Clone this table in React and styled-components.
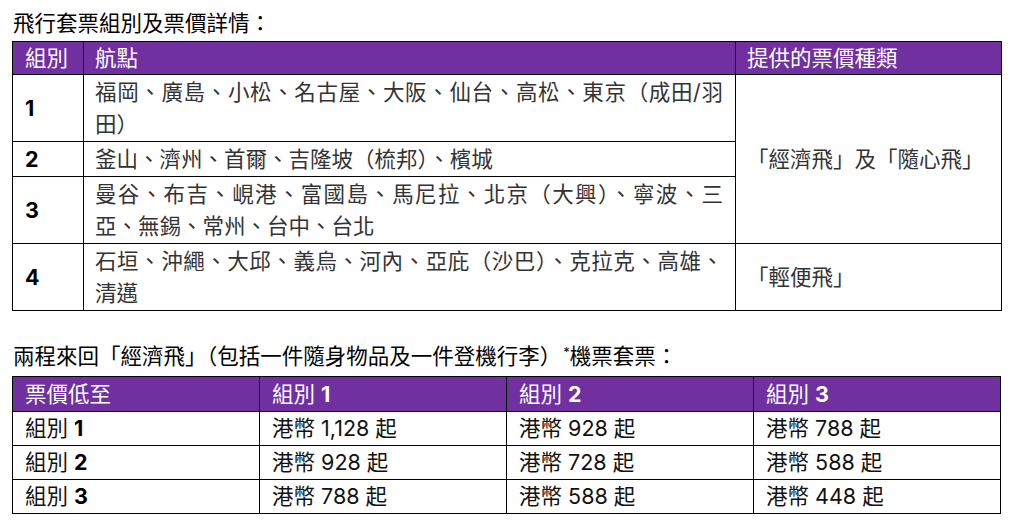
import React from "react";
import styled, { createGlobalStyle } from "styled-components";

const Global = createGlobalStyle`
  html, body { margin: 0; padding: 0; background: #fff; }
  body { font-family: Inter, "Noto Sans CJK TC", sans-serif; color: #000; }
`;

const PURPLE = "#7030a0";
const FONT = `Inter, "Noto Sans CJK TC", sans-serif`;

const Page = styled.div`
  padding: 7px 9px 0 12px;
  width: 989px;
  font-family: ${FONT};
  font-size: 21.5px;
`;

const Title = styled.h2`
  margin: ${(p) => p.$top || 0}px 0 ${(p) => p.$bottom || 0}px 1px;
  font-size: 21.5px;
  font-weight: 400;
  line-height: 32px;
  color: #000;
`;

const Star = styled.span`
  font-size: 13px;
  vertical-align: 7px;
  line-height: 0;
  margin-left: 2px;
`;

const Table = styled.table`
  width: 989px;
  border-collapse: collapse;
  table-layout: fixed;
  font-size: 21.5px;
`;

const HeadCell = styled.th`
  background: ${PURPLE};
  color: #fff;
  font-weight: 400;
  text-align: left;
  line-height: ${(p) => p.$lh || 32}px;
  padding: ${(p) => p.$pt || 0}px 8px 0 ${(p) => p.$pl || 11}px;
  border: 1px solid #000;
  white-space: nowrap;
`;

const Cell = styled.td`
  color: ${(p) => (p.$dark ? "#111" : "#333")};
  line-height: ${(p) => p.$lh || 32}px;
  padding: ${(p) => p.$pv ?? 1}px ${(p) => p.$pr ?? 8}px ${(p) => p.$pv ?? 1}px ${(p) => p.$pl || 11}px;
  border: 1px solid #000;
  vertical-align: middle;
  text-align: ${(p) => (p.$justify ? "justify" : "left")};
`;

const Num = styled.span`
  font-weight: 700;
  color: #000;
`;

const HeadNum = styled.span`
  font-weight: 700;
`;

const routes = [
  { g: "1", text: "福岡、廣島、小松、名古屋、大阪、仙台、高松、東京（成田/羽田）" },
  { g: "2", text: "釜山、濟州、首爾、吉隆坡（梳邦）、檳城" },
  { g: "3", text: "曼谷、布吉、峴港、富國島、馬尼拉、北京（大興）、寧波、三亞、無錫、常州、台中、台北" },
  { g: "4", text: "石垣、沖繩、大邱、義烏、河內、亞庇（沙巴）、克拉克、高雄、清邁" },
];

const prices = [
  ["1,128", "928", "788"],
  ["928", "728", "588"],
  ["788", "588", "448"],
];

export default function App() {
  return (
    <>
      <Global />
      <Page>
        <Title $bottom={2}>飛行套票組別及票價詳情：</Title>
        <Table>
          <colgroup>
            <col style={{ width: 71 }} />
            <col style={{ width: 652 }} />
            <col style={{ width: 266 }} />
          </colgroup>
          <thead>
            <tr>
              <HeadCell $pl={12}>組別</HeadCell>
              <HeadCell>航點</HeadCell>
              <HeadCell>提供的票價種類</HeadCell>
            </tr>
          </thead>
          <tbody>
            {routes.map((r, i) => (
              <tr key={r.g}>
                <Cell $pl={12}>
                  <Num>{r.g}</Num>
                </Cell>
                <Cell $justify $pr={12}>{r.text}</Cell>
                {i === 0 && <Cell rowSpan={3}>「經濟飛」及「隨心飛」</Cell>}
                {i === 3 && <Cell>「輕便飛」</Cell>}
              </tr>
            ))}
          </tbody>
        </Table>

        <Title $top={29} $bottom={4}>
          兩程來回「經濟飛」（包括一件隨身物品及一件登機行李）<Star>*</Star>機票套票：
        </Title>
        <Table>
          <thead>
            <tr>
              <HeadCell $pl={12} $lh={33} $pt={1}>票價低至</HeadCell>
              {["1", "2", "3"].map((g) => (
                <HeadCell key={g} $pl={12} $lh={33} $pt={1}>
                  組別 <HeadNum>{g}</HeadNum>
                </HeadCell>
              ))}
            </tr>
          </thead>
          <tbody>
            {prices.map((row, i) => (
              <tr key={i}>
                <Cell $pl={12} $lh={33} $pv={0} $dark>
                  組別 <Num>{i + 1}</Num>
                </Cell>
                {row.map((p, j) => (
                  <Cell key={j} $pl={12} $lh={33} $pv={0} $dark>
                    港幣 {p} 起
                  </Cell>
                ))}
              </tr>
            ))}
          </tbody>
        </Table>
      </Page>
    </>
  );
}
